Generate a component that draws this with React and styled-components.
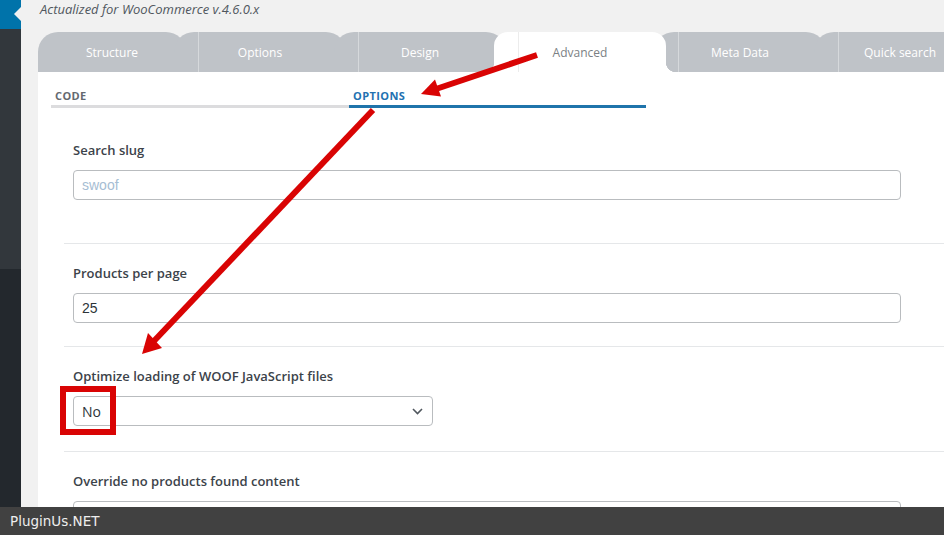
import React from 'react';
import styled, { createGlobalStyle } from 'styled-components';

const GlobalStyle = createGlobalStyle`
  html, body {
    margin: 0;
    padding: 0;
    height: 100%;
    overflow: hidden;
    background: #f1f1f1;
  }
  * { box-sizing: border-box; }
`;

const Page = styled.div`
  display: flex;
  height: 100vh;
  font-family: 'Open Sans', 'DejaVu Sans', sans-serif;
`;

const Sidebar = styled.div`
  flex: 0 0 21px;
  display: flex;
  flex-direction: column;
  background: #23282d;
`;

const MenuCurrent = styled.div`
  position: relative;
  height: 29px;
  background: #0073aa;

  &::after {
    content: '';
    position: absolute;
    right: 0;
    top: 7px;
    border-style: solid;
    border-width: 7px 7px 7px 0;
    border-color: transparent #f1f1f1 transparent transparent;
  }
`;

const MenuBlock = styled.div`
  height: 240px;
  background: #32373c;
`;

const Main = styled.div`
  flex: 1;
  min-width: 0;
  overflow: hidden;
  padding-left: 17px;
`;

const Caption = styled.div`
  padding-left: 2px;
  height: 32px;
  line-height: 18px;
  font-size: 13px;
  font-style: italic;
  color: #50575e;
  white-space: nowrap;
`;

const TabBar = styled.div`
  display: flex;
  height: 40px;
`;

const Tab = styled.div`
  position: relative;
  flex: 0 0 ${p => p.$w}px;
  margin-left: ${p => (p.$first ? 0 : -12)}px;
  display: flex;
  align-items: center;
  justify-content: center;
  background: ${p => (p.$active ? '#fff' : '#bfc3c8')};
  border-radius: ${p => (p.$active ? '14px 14px 0 0' : '20px 20px 0 0')};
  z-index: ${p => (p.$active ? 3 : 1)};
  font-size: 12px;
  color: ${p => (p.$active ? '#7b7f84' : '#fff')};
  white-space: nowrap;

  ${p => p.$active && `
    &::before, &::after {
      content: '';
      position: absolute;
      bottom: 0;
      width: 10px;
      height: 10px;
    }
    &::before {
      left: -10px;
      background: radial-gradient(circle at 0 0, transparent 10px, #fff 10.5px);
    }
    &::after {
      right: -10px;
      background: radial-gradient(circle at 100% 0, transparent 10px, #fff 10.5px);
    }
  `}
`;

const TabDivider = styled.span`
  position: absolute;
  left: 24px;
  top: 0;
  bottom: 0;
  width: 1px;
  background: ${p => (p.$active ? '#ececec' : '#d6d9dc')};
`;

const Panel = styled.div`
  background: #fff;
  min-height: 480px;
  padding-top: 16px;
`;

const SubTabs = styled.div`
  display: flex;
  margin-left: 13px;
`;

const SubTab = styled.div`
  flex: 0 0 ${p => p.$w}px;
  padding: 0 0 1px 4px;
  line-height: 16px;
  font-size: 11px;
  font-weight: 700;
  letter-spacing: 0.4px;
  color: ${p => (p.$active ? '#2271b1' : '#646970')};
  border-bottom: 3px solid ${p => (p.$active ? '#1f74ab' : '#dcdcde')};
`;

const Section = styled.div`
  margin-left: 26px;
  padding: ${p => p.$top}px 0 ${p => p.$bottom}px 9px;
  border-bottom: 1px solid #e5e7e9;
`;

const Label = styled.div`
  line-height: 18px;
  font-size: 13px;
  font-weight: 600;
  color: #3c434a;
  margin-bottom: 11px;
`;

const TextInput = styled.input`
  display: block;
  width: 828px;
  height: 30px;
  padding: 0 8px;
  border: 1px solid #b9bcbf;
  border-radius: 4px;
  background: #fff;
  font-family: 'Liberation Sans', Arial, sans-serif;
  font-size: 14px;
  color: #2c3338;
  outline: none;

  &::placeholder {
    color: #a6bdd3;
  }
`;

const Select = styled.div`
  display: flex;
  align-items: center;
  justify-content: space-between;
  width: 360px;
  height: 30px;
  padding: 0 8px;
  border: 1px solid #b9bcbf;
  border-radius: 4px;
  font-size: 14px;
  color: #2c3338;

  svg {
    margin-right: 1px;
  }
`;

const Overlay = styled.svg`
  position: fixed;
  left: 0;
  top: 0;
  width: 944px;
  height: 535px;
  pointer-events: none;
  z-index: 5;
`;

const BottomBar = styled.div`
  position: fixed;
  left: 0;
  right: 0;
  bottom: 0;
  height: 28px;
  display: flex;
  align-items: center;
  padding-left: 10px;
  background: #414141;
  color: #eeeeee;
  font-family: 'DejaVu Sans', sans-serif;
  font-size: 13.5px;
  z-index: 10;
`;

const tabs = [
  { name: 'Structure', w: 148 },
  { name: 'Options', w: 172 },
  { name: 'Design', w: 172 },
  { name: 'Advanced', w: 172, active: true },
  { name: 'Meta Data', w: 172 },
  { name: 'Quick search', w: 172 },
];

const Chevron = () => (
  <svg width="11" height="7" viewBox="0 0 11 7" fill="none">
    <path d="M1 1l4.5 4.5L10 1" stroke="#50575e" strokeWidth="1.6" />
  </svg>
);

const RED = '#d90404';

export default function App() {
  return (
    <>
      <GlobalStyle />
      <Page>
        <Sidebar>
          <MenuCurrent />
          <MenuBlock />
        </Sidebar>
        <Main>
          <Caption>Actualized for WooCommerce v.4.6.0.x</Caption>
          <TabBar>
            {tabs.map((t, i) => (
              <Tab key={t.name} $w={t.w} $first={i === 0} $active={t.active}>
                {i > 0 && <TabDivider $active={t.active} />}
                {t.name}
              </Tab>
            ))}
          </TabBar>
          <Panel>
            <SubTabs>
              <SubTab $w={298}>CODE</SubTab>
              <SubTab $w={297} $active>OPTIONS</SubTab>
            </SubTabs>
            <Section $top={33} $bottom={43}>
              <Label>Search slug</Label>
              <TextInput placeholder="swoof" readOnly />
            </Section>
            <Section $top={20} $bottom={23}>
              <Label>Products per page</Label>
              <TextInput value="25" readOnly />
            </Section>
            <Section $top={20} $bottom={25}>
              <Label>Optimize loading of WOOF JavaScript files</Label>
              <Select>
                <span>No</span>
                <Chevron />
              </Select>
            </Section>
            <Section $top={20} $bottom={22}>
              <Label>Override no products found content</Label>
              <TextInput readOnly />
            </Section>
          </Panel>
        </Main>
      </Page>

      <Overlay viewBox="0 0 944 535">
        <line x1="537" y1="55" x2="436" y2="89" stroke={RED} strokeWidth="6" />
        <polygon points="421,94 441,96.5 435,79.5" fill={RED} />
        <line x1="373" y1="110" x2="154" y2="341" stroke={RED} strokeWidth="6" />
        <polygon points="142,354 162,348 148,333" fill={RED} />
        <rect x="63" y="389" width="50" height="43" fill="none" stroke={RED} strokeWidth="6" />
      </Overlay>

      <BottomBar>PluginUs.NET</BottomBar>
    </>
  );
}
